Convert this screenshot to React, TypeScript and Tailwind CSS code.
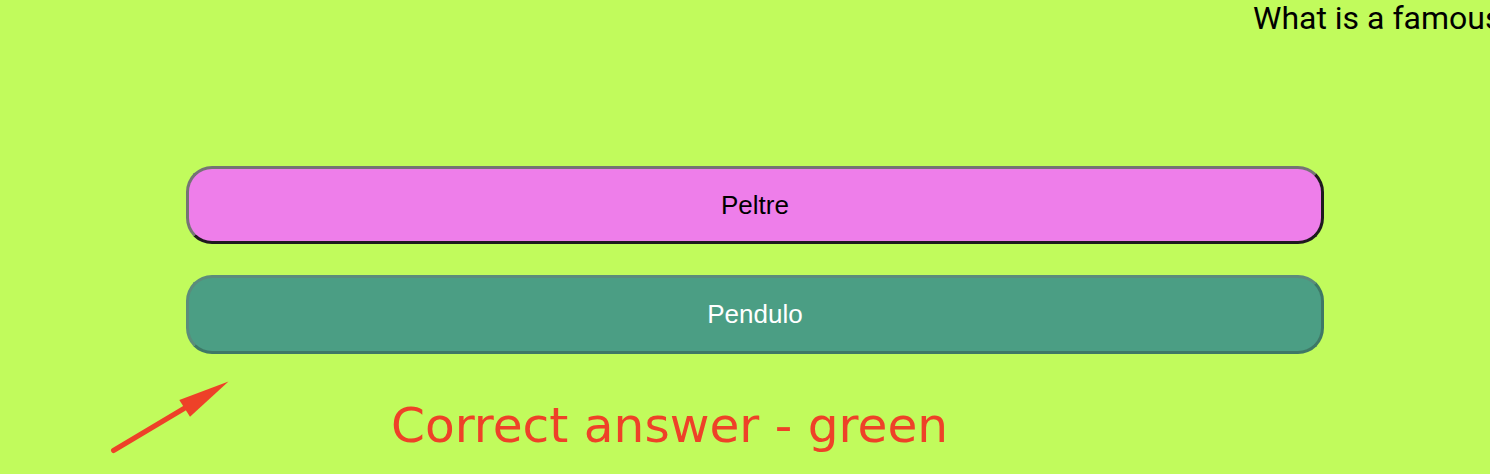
import React from 'react';

const QuizAnswers: React.FC = () => {
  return (
    <div className="flex flex-col gap-[31px] ml-[186px] w-[1138px] mt-[130px]">
      <button className="h-[78px] w-full rounded-[26px] bg-[#ee7eea] border-[3px] border-solid border-t-[#747474] border-l-[#747474] border-b-[#1e1a1e] border-r-[#1e1a1e] text-[26px] text-black font-['Liberation_Sans',Arial,sans-serif]">
        Peltre
      </button>
      <button className="h-[79px] w-full rounded-[26px] bg-[#4b9e84] border-[3px] border-solid border-t-[#5b8c7b] border-l-[#5b8c7b] border-b-[#3e7866] border-r-[#3e7866] text-[26px] text-white font-['Liberation_Sans',Arial,sans-serif]">
        Pendulo
      </button>
    </div>
  );
};

export default function App() {
  return (
    <div className="w-[1490px] h-[474px] overflow-hidden bg-[#c1fb5c] flex flex-col">
      {/* question text runs off the right edge */}
      <div className="pl-[1253px] pt-[1px] whitespace-nowrap text-[32px] leading-[35px] text-black font-['Roboto',sans-serif]">
        What is a famous
      </div>

      <QuizAnswers />

      {/* annotation */}
      <div className="flex items-start mt-[24px] pl-[110px]">
        <svg width="122" height="78" viewBox="0 0 122 78" className="shrink-0">
          <line x1="3.5" y1="72.5" x2="74" y2="30.5" stroke="#ee4128" strokeWidth="5" strokeLinecap="round" />
          <polygon points="118.5,3.5 69.3,22 80,38.7" fill="#ee4128" />
        </svg>
        <span className="ml-[159px] mt-[19px] whitespace-nowrap text-[48.6px] leading-[56px] text-[#ee4128] font-['DejaVu_Sans',Verdana,sans-serif]">
          Correct answer - green
        </span>
      </div>
    </div>
  );
}
